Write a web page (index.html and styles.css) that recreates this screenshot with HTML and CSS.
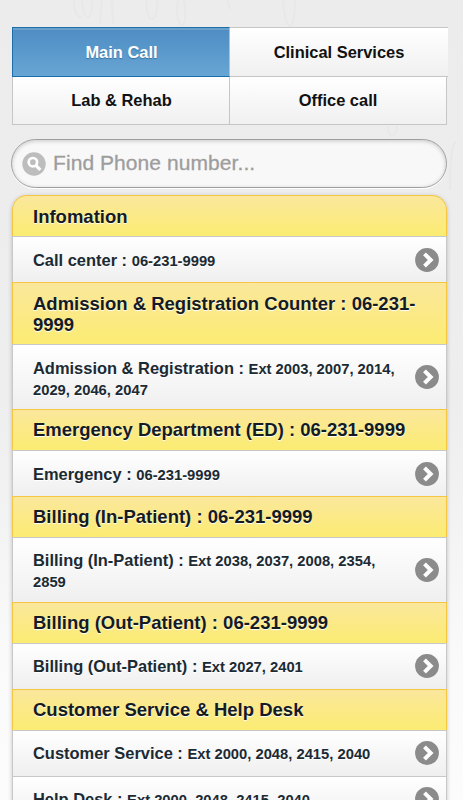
FILE: index.html
```
<!DOCTYPE html>
<html lang="en">
<head>
<meta charset="utf-8">
<title>Phone numbers</title>
<link rel="stylesheet" href="styles.css">
</head>
<body>
<svg class="grain" width="463" height="200" viewBox="0 0 463 200" aria-hidden="true">
  <path d="M74 0c0 12 3 17 7 17M82 0c1 10 3 17 6 17s4-8 4-17M102 0l-2 24M112 0l1 24M146 0c0 12 3 19 6 19s6-8 5-19M178 0c-2 14 0 25 4 25s4-12 2-25M228 0c0 5 2 9 3 9M283 0c1 15 4 26 7 26s5-12 5-26M388 126c0 6 2 10 4 10s5-4 5-10M450 190c0-30 2-48 6-48"/>
</svg>
<main class="page">
  <nav class="tabs">
    <a class="tab active">Main Call</a>
    <a class="tab wide">Clinical Services</a>
    <a class="tab">Lab &amp; Rehab</a>
    <a class="tab">Office call</a>
  </nav>
  <div class="search">
    <svg width="24" height="24" viewBox="0 0 24 24" fill="none"><circle cx="12" cy="12" r="11.7" fill="#bdbdbd"/><circle cx="10.9" cy="10.2" r="4.2" stroke="#fff" stroke-width="2.7"/><path d="M13.8 13.4l4.5 4.5" stroke="#fff" stroke-width="3.2"/></svg>
    <span>Find Phone number...</span>
  </div>
  <svg class="defs" width="0" height="0"><symbol id="arrow" viewBox="0 0 24 24"><circle cx="12" cy="12" r="11.9" fill="#8b8b8b"/><path d="M9.5 5.8l6.2 6.2-6.2 6.2" fill="none" stroke="#fff" stroke-width="4"/></symbol></svg>
  <ul class="list">
    <li class="head">Infomation</li>
    <li class="item"><p>Call center : <small>06-231-9999</small></p><svg><use href="#arrow"/></svg></li>
    <li class="head tall">Admission &amp; Registration Counter : 06-231-<br>9999</li>
    <li class="item tall"><p>Admission &amp; Registration : <small>Ext 2003, 2007, 2014,<br>2029, 2046, 2047</small></p><svg><use href="#arrow"/></svg></li>
    <li class="head">Emergency Department (ED) : 06-231-9999</li>
    <li class="item"><p>Emergency : <small>06-231-9999</small></p><svg><use href="#arrow"/></svg></li>
    <li class="head">Billing (In-Patient) : 06-231-9999</li>
    <li class="item tall"><p>Billing (In-Patient) : <small>Ext 2038, 2037, 2008, 2354,<br>2859</small></p><svg><use href="#arrow"/></svg></li>
    <li class="head">Billing (Out-Patient) : 06-231-9999</li>
    <li class="item"><p>Billing (Out-Patient) : <small>Ext 2027, 2401</small></p><svg><use href="#arrow"/></svg></li>
    <li class="head">Customer Service &amp; Help Desk</li>
    <li class="item"><p>Customer Service : <small>Ext 2000, 2048, 2415, 2040</small></p><svg><use href="#arrow"/></svg></li>
    <li class="item"><p>Help Desk : <small>Ext 2000, 2048, 2415, 2040</small></p><svg><use href="#arrow"/></svg></li>
  </ul>
</main>
</body>
</html>
```
FILE: styles.css
```
* { box-sizing: border-box; }
html { height: 800px; overflow: hidden; }
body {
  margin: 0;
  height: 800px;
  overflow: hidden;
  background: linear-gradient(#ececec, #eeeeee 50%, #f3f3f3 65%, #fafafa 82%, #fcfcfc);
  font-family: "Liberation Sans", Arial, sans-serif;
  font-weight: bold;
  color: #151b22;
}
.grain { position: absolute; top: 0; left: 0; fill: none; stroke: #e8e8e8; stroke-width: 2; }
.page { position: relative; padding: 27px 16px 0 12px; }
.tabs { display: grid; grid-template-columns: 218px 217px; grid-template-rows: 50px 48px; }
.tab {
  display: flex;
  align-items: center;
  justify-content: center;
  border: 1px solid #c6c6c6;
  border-top-width: 0;
  border-left-width: 0;
  background: linear-gradient(#fff, #f0f0f0);
  font-size: 16.45px;
  color: #111;
}
.tab:nth-child(odd) { border-left-width: 1px; padding-left: 1px; }
.tab.wide { width: 218px; border-top-width: 1px; border-right: 0; }
.tab.active {
  border: 1px solid #1c6ea8;
  border-right-color: #c9b9b0;
  background: linear-gradient(#4e8cc3, #67a6d4);
  box-shadow: inset 0 2px 0 #6ba0cd;
  color: #fff;
  text-shadow: 0 1px 1px #3373a5;
}
.search {
  display: flex;
  align-items: center;
  gap: 7px;
  width: 436px;
  height: 49px;
  margin: 14px 0 0 -1px;
  padding: 0 10px;
  border: 1px solid #9e9e9e;
  border-radius: 25px;
  background: #f8f8f8;
  box-shadow: inset 0 1px 4px rgba(0,0,0,.2), 0 1px 0 #fff;
  font-size: 21px;
  font-weight: normal;
  color: #9d9d9d;
  -webkit-text-stroke: .3px #9d9d9d;
}
.search span { padding-bottom: 2px; letter-spacing: .07px; }
.defs { position: absolute; }
.list {
  width: 435px;
  margin: 7px 0 0;
  padding: 0;
  list-style: none;
  border-radius: 15px 15px 0 0;
  box-shadow: 0 1px 4px rgba(0,0,0,.22);
}
.head, .item { border: 1px solid #c8c8c8; border-bottom: 0; }
.head {
  height: 41.4px;
  padding: 9.5px 20px 0 20px;
  border-color: #f5c642;
  background: linear-gradient(#fbe79c, #fbec72);
  font-size: 18.5px;
  line-height: 21.2px;
  text-shadow: 0 1px 1px #fff;
}
.head.tall { height: 62.4px; }
.head:first-child { border-radius: 15px 15px 0 0; }
.item {
  display: flex;
  align-items: center;
  justify-content: space-between;
  height: 45.7px;
  padding: 0 7px 0 20px;
  background: linear-gradient(#fff, #efefef);
  font-size: 16.45px;
  line-height: 20px;
  color: #1b2a33;
  text-shadow: 0 1px 0 #fff;
}
.item.tall { height: 64.3px; }
.item p { margin: 0; padding-top: 1px; white-space: nowrap; }
.item.tall p { padding-top: 3px; }
.item small { font-size: 14.75px; }
.item svg { width: 24px; height: 24px; flex: none; }
```
